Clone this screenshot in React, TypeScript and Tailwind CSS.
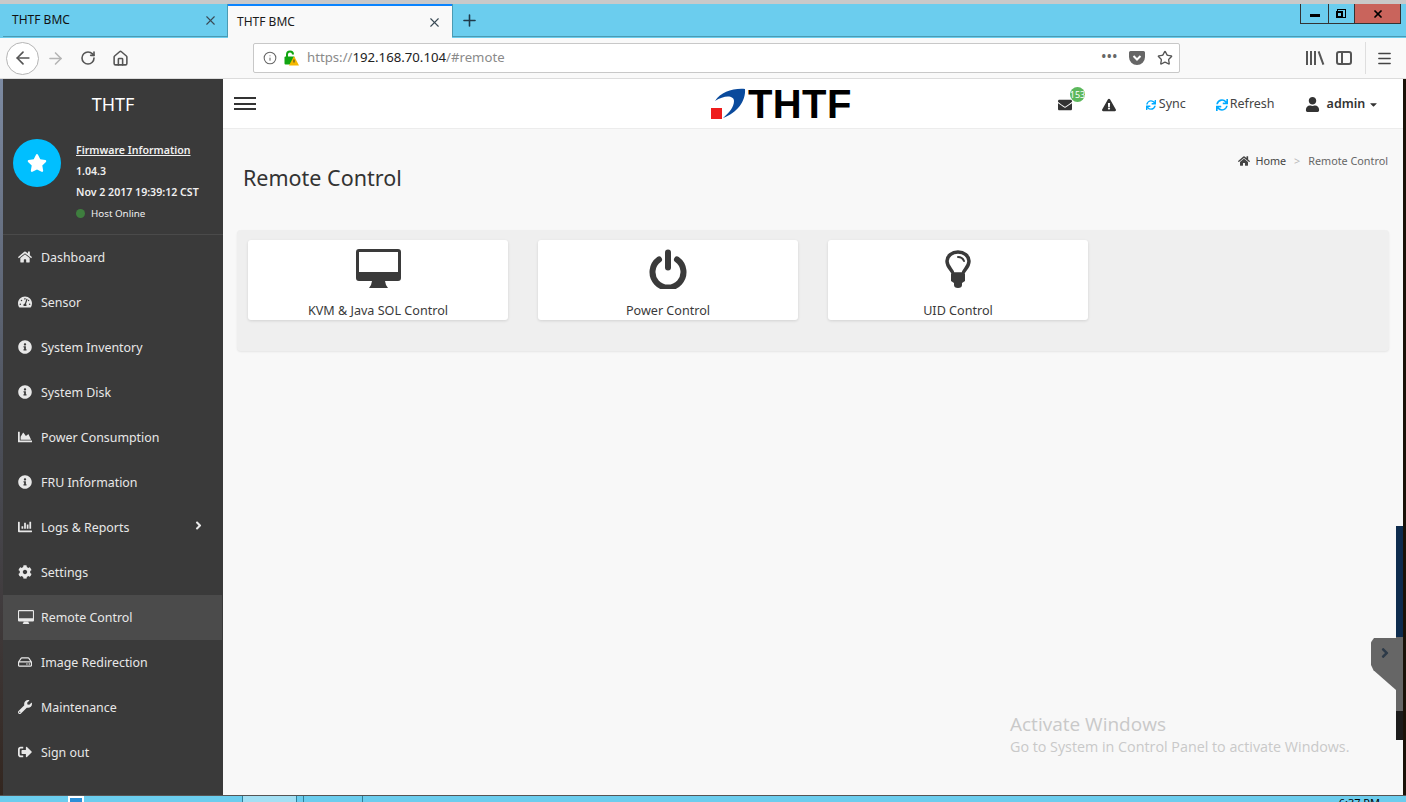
import {
  FaHome,
  FaTachometerAlt,
  FaInfoCircle,
  FaChartArea,
  FaChartBar,
  FaCog,
  FaRegHdd,
  FaWrench,
  FaSignOutAlt,
  FaEnvelope,
  FaExclamationTriangle,
  FaSync,
  FaUser,
  FaStar,
  FaAngleRight,
  FaCaretDown,
} from "react-icons/fa";
import { ArrowLeft, ArrowRight, RotateCw, Home, Info, Star, X, Plus, Menu } from "lucide-react";

const font = "font-['Noto_Sans',sans-serif]";

// old font-awesome monitor: thick chin, short stand
const Monitor = ({ className }: { className?: string }) => (
  <svg viewBox="0 0 45 39" className={className} fill="currentColor">
    <path
      fillRule="evenodd"
      d="M3 0h39a3 3 0 0 1 3 3v26a3 3 0 0 1-3 3H3a3 3 0 0 1-3-3V3a3 3 0 0 1 3-3zM3 3v20h39V3z"
    />
    <path d="M16 32h13l1 4 2 3H13l2-3z" />
  </svg>
);

const PowerIcon = ({ className }: { className?: string }) => (
  <svg viewBox="0 0 38 40" className={className} fill="none" stroke="currentColor" strokeLinecap="round">
    <path d="M10 10.500a15.500 15.500 0 1 0 18 0" strokeWidth="6" />
    <path d="M19 3.500v15" strokeWidth="6" />
  </svg>
);

const BulbIcon = ({ className }: { className?: string }) => (
  <svg viewBox="0 0 26 38" className={className} fill="none" stroke="currentColor">
    <path
      d="M8 24c0-4-6-6-6-13C2 6 7 2 13 2s11 4 11 9c0 7-6 9-6 13z"
      strokeWidth="3.500"
      strokeLinejoin="round"
    />
    <path d="M13 7c3 0 5 1.500 6 4" strokeWidth="2" strokeLinecap="round" />
    <path d="M6 24h14v7l-3 2v2a4 3 0 0 1-8 0v-2l-3-2z" fill="currentColor" stroke="none" />
  </svg>
);

const menu = [
  { label: "Dashboard", icon: <FaHome /> },
  { label: "Sensor", icon: <FaTachometerAlt /> },
  { label: "System Inventory", icon: <FaInfoCircle /> },
  { label: "System Disk", icon: <FaInfoCircle /> },
  { label: "Power Consumption", icon: <FaChartArea /> },
  { label: "FRU Information", icon: <FaInfoCircle /> },
  { label: "Logs & Reports", icon: <FaChartBar />, arrow: true },
  { label: "Settings", icon: <FaCog /> },
  { label: "Remote Control", icon: <Monitor className="w-[16px] h-[14px]" />, active: true },
  { label: "Image Redirection", icon: <FaRegHdd /> },
  { label: "Maintenance", icon: <FaWrench /> },
  { label: "Sign out", icon: <FaSignOutAlt /> },
];

const Tab = ({ active }: { active?: boolean }) => (
  <div
    className={
      active
        ? "w-[224px] h-[34px] bg-[#f9f9f9] border-t-2 border-[#0a84ff] flex items-center pl-[9px] pr-[10px] text-[#1a1a1a]"
        : "w-[224px] h-[33px] flex items-center pl-[9px] pr-[9px] text-[#111] border-b border-[#4b9bb3]"
    }
  >
    <span className="text-[12px] flex-1">THTF BMC</span>
    <X size={15} strokeWidth={1.8} className="text-[#3a4a55]" />
  </div>
);

const BrowserChrome = () => (
  <div className="shrink-0">
    <div className="h-[4px] bg-[#c9c9c9]" />
    <div className="h-[34px] bg-[#6bcdee] flex pl-[3px] relative">
      <Tab />
      <div className="w-px h-[33px] bg-[#4b9bb3]" />
      <Tab active />
      <div className="w-px h-[33px] bg-[#4b9bb3]" />
      <div className="flex-1 h-[33px] border-b border-[#4b9bb3] pl-[7px] flex items-center">
        <Plus size={19} strokeWidth={2} className="text-[#1f3a4a]" />
      </div>
      {/* window buttons */}
      <div className="absolute top-0 right-[5px] h-[20px] flex border-x border-b border-[#333] text-black">
        <div className="w-[28px] flex items-center justify-center border-r border-[#333]">
          <div className="w-[10px] h-[3px] bg-black mt-[3px]" />
        </div>
        <div className="w-[26px] flex items-center justify-center border-r border-[#333]">
          <div className="w-[9px] h-[9px] border border-black relative">
            <div className="absolute left-[-2px] top-[1px] w-[7px] h-[7px] border-2 border-black bg-[#6bcdee]" />
          </div>
        </div>
        <div className="w-[45px] bg-[#c9645c] flex items-center justify-center">
          <X size={12} strokeWidth={3.5} />
        </div>
      </div>
    </div>
    <div className="h-[41px] bg-[#f9f9f9] border-b border-[#dcdcdc] flex items-center pl-[6px] text-[#555]">
      <div className="w-[33px] h-[33px] rounded-full border border-[#b5b5b5] bg-white flex items-center justify-center">
        <ArrowLeft size={20} strokeWidth={2} />
      </div>
      <ArrowRight size={19} strokeWidth={2} className="ml-[7px] text-[#b5b5b5]" />
      <RotateCw size={16} strokeWidth={2.4} className="ml-[15px]" />
      <Home size={17} strokeWidth={2.2} className="ml-[16px]" />
      <div className="ml-[124px] w-[927px] h-[30px] bg-white border border-[#c8c8c8] rounded-[2px] flex items-center pl-[9px] pr-[6px]">
        <Info size={14} strokeWidth={1.8} className="text-[#666]" />
        <svg width="16" height="18" viewBox="0 0 16 18" className="ml-[6px]">
          <path d="M4 8V5.5a3 3 0 0 1 6 0" fill="none" stroke="#12a512" strokeWidth="2" />
          <rect x="1.500" y="7.500" width="10" height="8" rx="1" fill="#12a512" />
          <path d="M11 7l5 9.500H6z" fill="#f5b800" />
          <rect x="10.500" y="10.500" width="1" height="3" fill="#333" />
        </svg>
        <span className="ml-[8px] text-[13.200px] text-[#8a8a8a]">
          https://<span className="text-[#222]">192.168.70.104</span>/#remote
        </span>
        <div className="flex-1" />
        <span className="text-[#666] text-[12px] font-bold tracking-[1px] mb-[3px]">•••</span>
        <svg width="16" height="14" viewBox="0 0 16 14" className="ml-[11px]">
          <path d="M1.500 0h13A1.500 1.500 0 0 1 16 1.500V6a8 8 0 0 1-16 0V1.500A1.500 1.500 0 0 1 1.500 0z" fill="#666" />
          <path d="M4.500 5L8 8.500 11.500 5" fill="none" stroke="#fff" strokeWidth="2" />
        </svg>
        <Star size={16} strokeWidth={2} className="ml-[12px] text-[#555]" />
      </div>
      {/* library */}
      <div className="ml-[126px] h-[14px] w-[16px] flex items-stretch gap-[2px]">
        <div className="w-[2px] bg-[#555]" />
        <div className="w-[2px] bg-[#555]" />
        <div className="w-[2px] bg-[#555]" />
        <div className="w-[2px] bg-[#555] -rotate-[20deg] ml-[2px]" />
      </div>
      <div className="ml-[14px] w-[16px] h-[14px] border-2 border-[#555] rounded-[3px] flex">
        <div className="w-[5px] border-r-2 border-[#555]" />
      </div>
      <div className="ml-[13px] w-px h-[32px] bg-[#dedede]" />
      <Menu size={17} strokeWidth={2} className="ml-[10px] text-[#444]" />
    </div>
  </div>
);

const Sidebar = () => (
  <aside className="w-[220px] shrink-0 bg-[#3a3a3a] text-[#f0f0f0] flex flex-col">
    <div className="h-[52px] flex items-center justify-center text-[18px] text-white pb-[1px]">THTF</div>
    <div className="flex h-[104px] border-b border-[#4a4a4a] pl-[10px] pt-[8px]">
      <div className="w-[48px] h-[48px] rounded-full bg-[#00bfff] flex items-center justify-center text-white text-[20px]">
        <FaStar />
      </div>
      <div className="ml-[15px] mt-[1px] text-[10.600px] font-semibold leading-[21px]">
        <div className="underline">Firmware Information</div>
        <div>1.04.3</div>
        <div>Nov 2 2017 19:39:12 CST</div>
        <div className="flex items-center text-[9.800px] font-normal">
          <span className="w-[9px] h-[9px] rounded-full bg-[#3e7e3e] mr-[6px]" />
          Host Online
        </div>
      </div>
    </div>
    <nav>
      {menu.map((m) => (
        <div
          key={m.label}
          className={
            "h-[45px] flex items-center pl-[15px] pt-[2px] text-[12.400px] text-[#e8e8e8] " +
            (m.active ? "bg-[#4b4b4b] mr-[1px]" : "")
          }
        >
          <span className="w-[23px] text-[14px] shrink-0 mb-[3px]">{m.icon}</span>
          <span>{m.label}</span>
          {m.arrow && <FaAngleRight className="ml-auto mr-[18px] mb-[6px] text-[13px]" />}
        </div>
      ))}
    </nav>
  </aside>
);

const Navbar = () => (
  <header className="h-[50px] shrink-0 bg-white border-b border-[#ececec] flex items-center text-[#333]">
    <div className="ml-[11px] w-[22px] flex flex-col gap-[3.500px]">
      <div className="h-[2px] bg-[#333]" />
      <div className="h-[2px] bg-[#333]" />
      <div className="h-[2px] bg-[#333]" />
    </div>
    {/* logo */}
    <div className="ml-[455px] flex items-center">
      <svg width="36" height="34" viewBox="0 0 36 34">
        <path
          d="M4 14C10 5 22 1 34 2c1 12-8 24-22 29 6-5 11-11 11-17 0-6-10-6-19 0z"
          fill="#0a4a9c"
        />
        <rect x="0" y="21" width="11" height="11" fill="#ee1c1c" />
      </svg>
      <span className="font-['Liberation_Sans',sans-serif] font-bold text-[40px] leading-none text-black tracking-[0.4px] ml-[1px]">
        THTF
      </span>
    </div>
    <div className="ml-[206px] mt-[2px] relative text-[14px]">
      <FaEnvelope />
      <span className="absolute -top-[11px] left-[12px] w-[15px] h-[15px] rounded-full bg-[#5cb85c] text-white text-[9px] leading-[15px] overflow-hidden text-center">
        153
      </span>
    </div>
    <FaExclamationTriangle className="ml-[30px] mt-[2px] text-[14px]" />
    <div className="ml-[30px] mt-[2px] flex items-center text-[12.500px] text-[#444]">
      <FaSync className="text-[#00aaff] text-[10px] mr-[3px]" />
      Sync
    </div>
    <div className="ml-[30px] mt-[2px] flex items-center text-[12.500px] text-[#444]">
      <FaSync className="text-[#00aaff] text-[12px] mr-[2px]" />
      Refresh
    </div>
    <div className="ml-[30px] mt-[2px] flex items-center text-[12.500px] text-[#333]">
      <FaUser className="text-[15px] mr-[7px]" />
      <span className="font-semibold">admin</span>
      <FaCaretDown className="ml-[3px] text-[11px]" />
    </div>
  </header>
);

const Card = ({ icon, label }: { icon: React.ReactNode; label: string }) => (
  <div className="w-[260px] h-[80px] bg-white rounded-[3px] shadow-[0_1px_3px_rgba(0,0,0,0.12)] flex flex-col items-center text-[#3a3a3a]">
    <div className="h-[60px] flex items-center justify-center pb-[3px]">{icon}</div>
    <div className="text-[12.600px] leading-[18px] mt-[2px]">{label}</div>
  </div>
);

const Content = () => (
  <main className="flex-1 bg-[#f8f8f8] pl-[14px] pr-[14px]">
    <div className="flex justify-between h-[101px]">
      <h1 className="text-[21.500px] text-[#333] ml-[6px] mt-[34px] leading-[30px]">Remote Control</h1>
      <div className="flex items-center h-[16px] mt-[24px] mr-[1px] text-[10.800px] text-[#666]">
        <FaHome className="text-[#444] text-[12px] mr-[5px]" />
        <span className="text-[#444]">Home</span>
        <span className="mx-[8px] text-[#bbb]">&gt;</span>
        <span>Remote Control</span>
      </div>
    </div>
    <div className="h-[121px] bg-[#efefef] rounded-[4px] shadow-[0_1px_2px_rgba(0,0,0,0.08)] pl-[11px] pt-[10px] flex gap-[30px] items-start">
      <Card icon={<Monitor className="w-[45px] h-[39px]" />} label="KVM & Java SOL Control" />
      <Card icon={<PowerIcon className="w-[38px] h-[40px]" />} label="Power Control" />
      <Card icon={<BulbIcon className="w-[26px] h-[38px]" />} label="UID Control" />
    </div>
  </main>
);

export default function App() {
  return (
    <div className={`w-[1406px] h-[802px] overflow-hidden relative flex flex-col bg-[#1c1c1c] ${font}`}>
      <BrowserChrome />
      <div className="flex-1 flex min-h-0">
        <div className="w-[3px] shrink-0 bg-linear-to-b from-[#7d8ba3] via-[#4b4f59] to-[#33261f]" />
        <Sidebar />
        <div className="flex-1 flex flex-col min-w-0">
          <Navbar />
          <Content />
        </div>
        <div className="w-[3px] shrink-0 bg-[#1a1208]" />
      </div>
      <div className="h-[7px] shrink-0 bg-[#6bcdee] border-t border-[#555] pl-[3px] flex relative overflow-hidden">
        <div className="ml-[65px] w-[16px] h-[8px] border-2 border-white bg-[#2a8fd8]" />
        <div className="ml-[158px] w-[55px] h-[8px] border-x border-[#2f7f97] bg-[#a3e0f4]" />
        <div className="ml-[6px] w-[60px] h-[8px] border-x border-[#2f7f97]" />
        <span className="absolute right-[26px] top-[1px] text-[11px] leading-[12px] text-black">6:37 PM</span>
      </div>

      {/* things lying behind the page on the right, and the slide-out tab */}
      <div className="absolute left-[1396px] top-[526px] w-[7px] h-[111px] bg-[#0e2c4e]" />
      <div className="absolute left-[1396px] top-[637px] w-[7px] h-[74px] bg-[#666]" />
      <div className="absolute left-[1396px] top-[711px] w-[7px] h-[29px] bg-[#1c1c1c]" />
      <div className="absolute left-[1371px] top-[638px] w-[25px] h-[52px] bg-[#666] text-[#2d3a48] [clip-path:polygon(12%_0,100%_0,100%_100%,10%_62%,0_52%,0_8%)] flex justify-center pt-[7px] pl-[3px] text-[16px]">
        <FaAngleRight />
      </div>

      {/* windows watermark */}
      <div className="absolute left-[1010px] top-[712px] font-['Open_Sans',sans-serif] text-[#c9c9c9] pointer-events-none">
        <div className="text-[19px] leading-[25px]">Activate Windows</div>
        <div className="text-[14.300px] leading-[20px]">Go to System in Control Panel to activate Windows.</div>
      </div>
    </div>
  );
}
